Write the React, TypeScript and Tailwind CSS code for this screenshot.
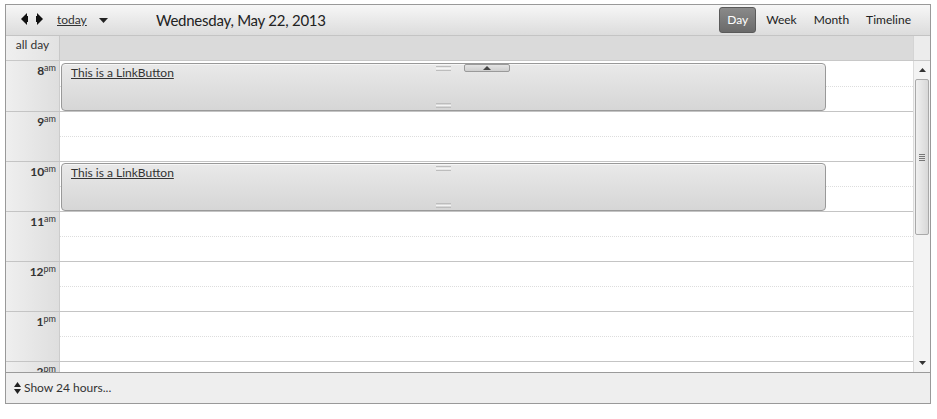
import React from "react";

const font = { fontFamily: 'Lato, "Open Sans", "Noto Sans", sans-serif' };

function Grip() {
  return (
    <div className="flex flex-col gap-[1px] w-[15px]">
      <div className="h-px bg-[#bdbdbd]" />
      <div className="h-px bg-[#f4f4f4]" />
      <div className="h-px bg-[#bdbdbd]" />
    </div>
  );
}

function Event({ withButton, top }: { withButton?: boolean; top: string }) {
  return (
    <div className={`absolute left-[1px] ${top} w-[765px] h-[48px] rounded-[4px] border border-[#999] bg-gradient-to-b from-[#e9e9e9] to-[#d6d6d6] shadow-[inset_0_1px_0_#f6f6f6]`}>
      <a className="absolute left-[9px] top-[1px] text-[12px] text-[#333] underline leading-[16px]">
        This is a LinkButton
      </a>
      <div className="absolute left-[374px] top-[2px]">
        <Grip />
      </div>
      <div className="absolute left-[374px] bottom-[2px]">
        <Grip />
      </div>
      {withButton && (
        <div className="absolute left-[402px] top-[0px] w-[46px] h-[8px] rounded-[2px] border border-[#9a9a9a] bg-gradient-to-b from-[#e4e4e4] to-[#cfcfcf] flex items-center justify-center">
          <svg width="8" height="4" viewBox="0 0 8 4">
            <polygon points="4,0 8,4 0,4" fill="#444" />
          </svg>
        </div>
      )}
    </div>
  );
}

const hours: [string, string][] = [
  ["8", "am"],
  ["9", "am"],
  ["10", "am"],
  ["11", "am"],
  ["12", "pm"],
  ["1", "pm"],
  ["2", "pm"],
];

export default function App() {
  return (
    <div className="w-[937px] h-[419px] bg-white relative" style={font}>
      <div className="absolute left-[5px] top-[4px] w-[926px] h-[400px] border border-[#999] flex flex-col overflow-hidden">
        {/* Toolbar */}
        <div className="h-[31px] shrink-0 border-b border-[#c4c4c4] bg-gradient-to-b from-[#f7f7f7] to-[#dcdcdc] flex items-center relative">
          <svg className="absolute left-[14px] top-[8px]" width="24" height="14" viewBox="0 0 24 14">
            <polygon points="1,6 7,0 7,12" fill="#111" />
            <polygon points="23,6 17,0 17,12" fill="#111" />
            <rect x="6" y="3" width="2" height="6" fill="#111" />
            <rect x="16" y="3" width="2" height="6" fill="#111" />
          </svg>
          <a className="absolute left-[51px] top-[7px] text-[12px] text-[#333] underline leading-[16px]">today</a>
          <svg className="absolute left-[93px] top-[13px]" width="9" height="5" viewBox="0 0 9 5">
            <polygon points="0,0 9,0 4.5,5" fill="#222" />
          </svg>
          <div className="absolute left-[150px] top-[5px] text-[15px] tracking-[-0.25px] leading-[20px] text-[#222]">
            Wednesday, May 22, 2013
          </div>
          <div className="absolute right-[19px] top-[2px] flex items-center text-[12px] leading-[16px] text-[#222]">
            <div className="h-[26px] w-[37px] flex items-center justify-center rounded-[3px] border border-[#5a5a5a] bg-gradient-to-b from-[#8a8a8a] to-[#6a6a6a] text-white mr-[10px]">
              Day
            </div>
            <div className="h-[26px] flex items-center mr-[17px]">Week</div>
            <div className="h-[26px] flex items-center mr-[17px]">Month</div>
            <div className="h-[26px] flex items-center">Timeline</div>
          </div>
        </div>

        {/* All day row */}
        <div className="h-[25px] shrink-0 flex border-b border-[#c8c8c8]">
          <div className="w-[54px] shrink-0 border-r border-[#c8c8c8] bg-gradient-to-r from-[#efefef] to-[#e2e2e2] text-[12px] text-[#333] flex justify-center pt-[1px] leading-[16px]">
            all day
          </div>
          <div className="flex-1 bg-[#dadada]" />
          <div className="w-[17px] shrink-0 border-l border-[#d4d4d4] bg-[#ececec]" />
        </div>

        {/* Grid */}
        <div className="h-[311px] shrink-0 flex overflow-hidden">
          <div className="flex-1 flex flex-col">
            {hours.map(([h, s], i) => (
              <div key={i} className={`h-[50px] shrink-0 flex ${i > 0 ? "border-t border-[#c4c4c4]" : ""}`}>
                <div className="w-[54px] shrink-0 border-r border-[#cccccc] bg-gradient-to-r from-[#efefef] to-[#dedede] flex justify-end pr-[3px] text-[#333]">
                  <div className="leading-[14px] pt-[1px]">
                    <span className="text-[12px] font-bold">{h}</span>
                    <span className="text-[9px] relative top-[-4px]">{s}</span>
                  </div>
                </div>
                <div className="flex-1 relative">
                  <div className={`absolute left-0 right-0 ${i > 0 ? "top-[24px]" : "top-[25px]"} border-t border-dotted border-[#dddddd]`} />
                  {i === 0 && <Event withButton top="top-[2px]" />}
                  {i === 2 && <Event top="top-[1px]" />}
                </div>
              </div>
            ))}
          </div>
          {/* Scrollbar */}
          <div className="w-[17px] shrink-0 border-l border-[#dcdcdc] bg-[#f3f3f3] relative">
            <svg className="absolute left-[5px] top-[7px]" width="7" height="4" viewBox="0 0 7 4">
              <polygon points="3.5,0 7,4 0,4" fill="#333" />
            </svg>
            <div className="absolute left-[1px] top-[18px] w-[14px] h-[156px] rounded-[2px] border border-[#a9a9a9] bg-gradient-to-r from-[#f0f0f0] to-[#d8d8d8] flex items-center justify-center">
              <div className="flex flex-col gap-[1px] w-[6px]">
                <div className="h-px bg-[#777]" />
                <div className="h-px bg-[#777]" />
                <div className="h-px bg-[#777]" />
                <div className="h-px bg-[#777]" />
              </div>
            </div>
            <svg className="absolute left-[5px] bottom-[7px]" width="7" height="4" viewBox="0 0 7 4">
              <polygon points="0,0 7,0 3.5,4" fill="#333" />
            </svg>
          </div>
        </div>

        {/* Footer */}
        <div className="flex-1 border-t border-[#9a9a9a] bg-[#eeeeee] flex items-center pl-[8px] text-[12px] text-[#333]">
          <svg width="7" height="12" viewBox="0 0 7 12" className="mr-[3px]">
            <polygon points="3.5,0 7,5 0,5" fill="#222" />
            <polygon points="0,7 7,7 3.5,12" fill="#222" />
          </svg>
          <span>Show 24 hours...</span>
        </div>
      </div>
    </div>
  );
}
